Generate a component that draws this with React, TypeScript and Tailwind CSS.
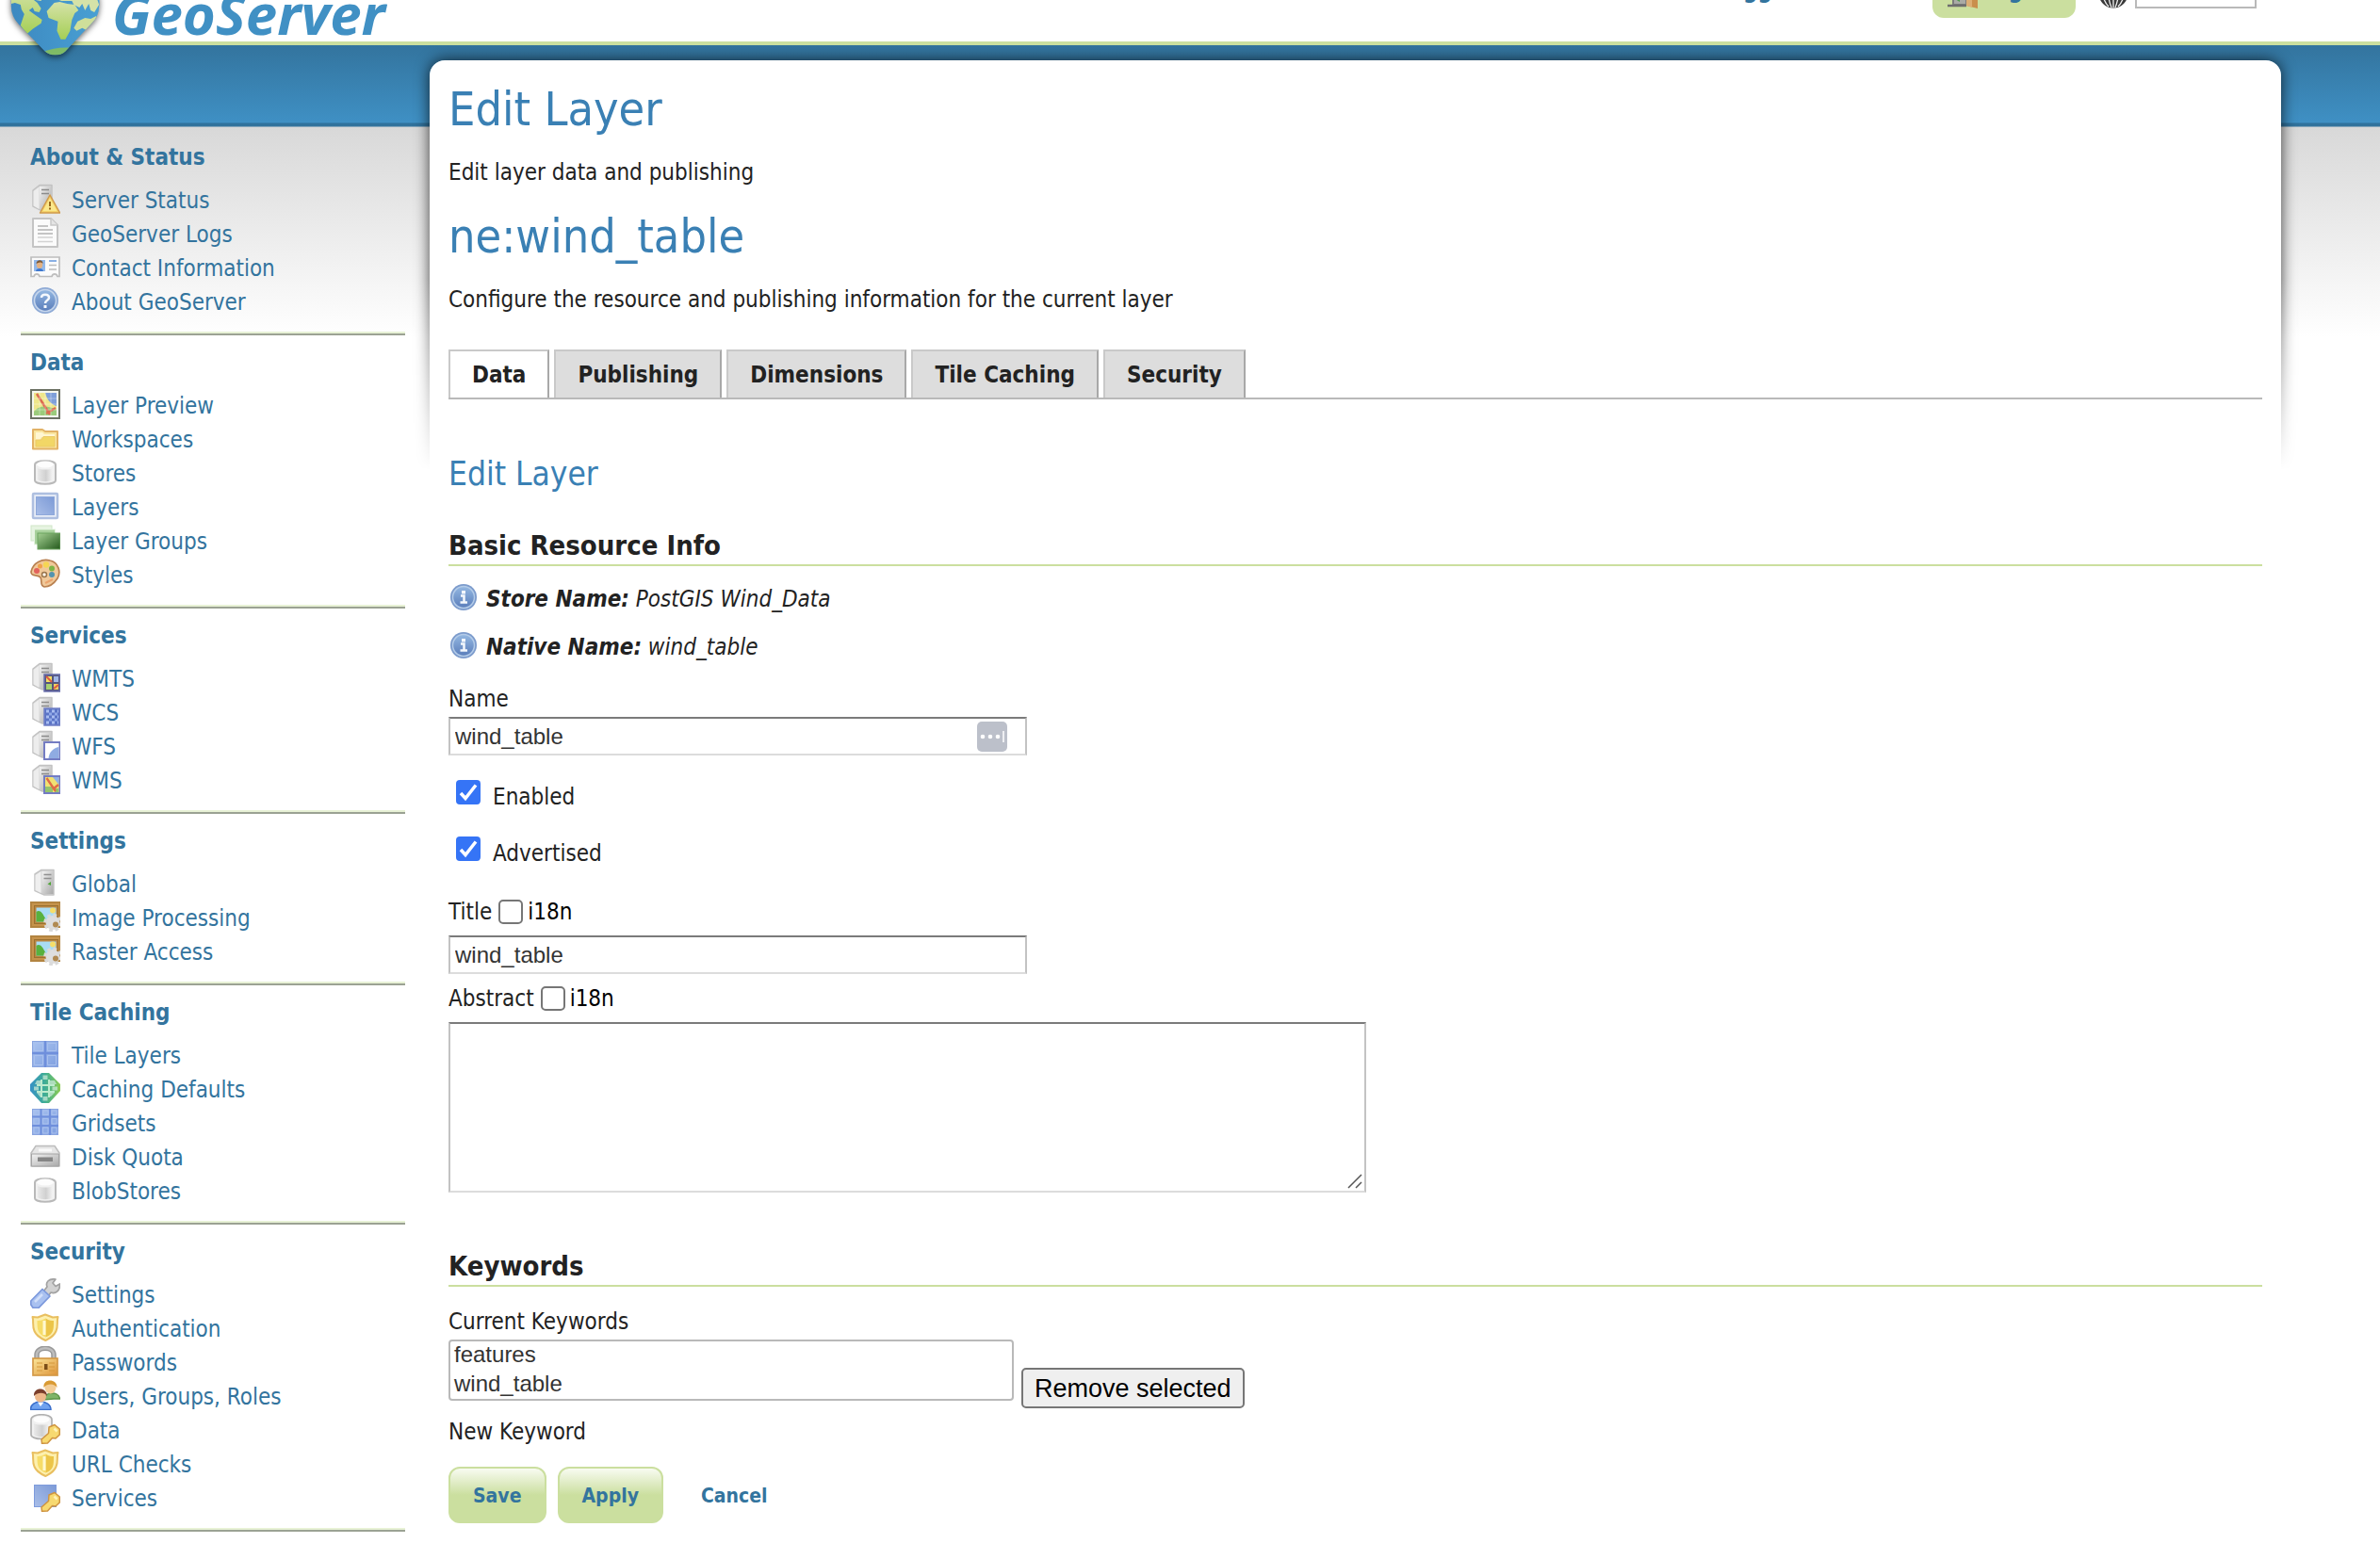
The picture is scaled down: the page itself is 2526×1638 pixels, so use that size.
import React from 'react';

type IconName =
  | 'serverWarn' | 'page' | 'vcard' | 'help' | 'map' | 'folder' | 'db' | 'layer' | 'layers' | 'palette'
  | 'wmts' | 'wcs' | 'wfs' | 'wms' | 'server' | 'picture' | 'grid2' | 'gwc' | 'grid3' | 'disk'
  | 'wrench' | 'shield' | 'lock' | 'users' | 'dbKey' | 'vectorKey' | 'info';

function Defs() {
  return (
    <svg width="0" height="0" className="absolute" aria-hidden="true">
      <defs>
        <linearGradient id="steel" x1="0" y1="0" x2="1" y2="1">
          <stop offset="0" stopColor="#f3f3f3" />
          <stop offset="1" stopColor="#a9a9a9" />
        </linearGradient>
        <linearGradient id="cyl" x1="0" y1="0" x2="1" y2="0">
          <stop offset="0" stopColor="#e9e9e9" />
          <stop offset=".55" stopColor="#d0d0d0" />
          <stop offset="1" stopColor="#f4f4f4" />
        </linearGradient>
        <linearGradient id="blue" x1="1" y1="0" x2="0" y2="1">
          <stop offset="0" stopColor="#7c9ad6" />
          <stop offset="1" stopColor="#a9bee8" />
        </linearGradient>
        <linearGradient id="tile" x1="0" y1="0" x2="1" y2="1">
          <stop offset="0" stopColor="#a9c3ef" />
          <stop offset="1" stopColor="#7f9fe0" />
        </linearGradient>
        <linearGradient id="green" x1="0" y1="0" x2="1" y2="1">
          <stop offset="0" stopColor="#a5d093" />
          <stop offset="1" stopColor="#23591c" />
        </linearGradient>
        <linearGradient id="brass" x1="0" y1="0" x2="1" y2="1">
          <stop offset="0" stopColor="#fbe69a" />
          <stop offset="1" stopColor="#dd9338" />
        </linearGradient>
        <linearGradient id="orb" x1="0" y1="0" x2="0" y2="1">
          <stop offset="0" stopColor="#94b8e2" />
          <stop offset="1" stopColor="#5a7dba" />
        </linearGradient>
        <linearGradient id="teal" x1="0" y1="0" x2="1" y2="0">
          <stop offset="0" stopColor="#3791c6" />
          <stop offset=".5" stopColor="#3fae94" />
          <stop offset="1" stopColor="#8ccb52" />
        </linearGradient>
        <linearGradient id="ocean" x1="0" y1="0" x2="1" y2="0">
          <stop offset="0" stopColor="#3b86be" />
          <stop offset="1" stopColor="#4ba3d6" />
        </linearGradient>
        <linearGradient id="land" x1="0" y1="0" x2="0" y2="1">
          <stop offset="0" stopColor="#d5e2a8" />
          <stop offset="1" stopColor="#a5cf55" />
        </linearGradient>
      </defs>
    </svg>
  );
}

const Tower = () => (
  <g>
    <path d="M3 7 L10 1.5 H23 V29 H13 L3 24 Z" fill="#d4d4d4" stroke="#c2c2c2" strokeWidth="1.5" strokeLinejoin="round" />
    <path d="M3.5 8 L9.500 3.500 V27 L3.500 23.500 Z" fill="#ededed" />
    <path d="M10 3 H22 V28 H12 L10 27 Z" fill="url(#steel)" />
    <path d="M12 6.500 H20 M12 10.500 H20" stroke="#8b8b8b" strokeWidth="1.700" />
  </g>
);

const Key = () => (
  <g stroke="#cf9440" strokeWidth="1.500" strokeLinejoin="round">
    <path d="M20 14 L26 11.500 L31.300 16 L31.300 22 L27 26 L23.500 25.500 L18.500 31 L12.500 31.300 L12 27 L19.500 20.500 Z" fill="#f7d970" />
    <path d="M25.500 15.500 L28.500 18.500" stroke="#fff2b8" strokeWidth="2.500" />
  </g>
);

const Cylinder = () => (
  <g>
    <path d="M5 8 C5 3 27 3 27 8 V25 C27 30 5 30 5 25 Z" fill="#f1f1f1" stroke="#b9b9b9" strokeWidth="2" />
    <path d="M8 12 C11 14 21 14 24 12 V24 C21 27 11 27 8 24 Z" fill="url(#cyl)" />
    <ellipse cx="16" cy="8" rx="9" ry="3.500" fill="#fdfdfd" />
  </g>
);

const Shield = () => (
  <g>
    <path d="M2.500 5 L8 5.500 L16 2.500 L24 5.500 L29.500 5 C28 10 30 15 27.500 20 C25 26 20 28 16.500 30 C12 28 7 26 4.500 20 C2 15 4 10 2.500 5 Z" fill="#fdf0ae" stroke="#e9bf5f" strokeWidth="2" strokeLinejoin="round" />
    <path d="M16.500 6.500 C12 9 9 9 7.500 9 C7.500 19 8 23 16.500 26.500 Z" fill="#f6dc68" />
    <path d="M16.500 6.500 C20 9 23 9 25 9 C25 19 25 23 16.500 26.500 Z" fill="#ecc548" />
    <path d="M15 9 V24" stroke="#fff8d0" strokeWidth="3" />
  </g>
);

const icons: Record<IconName, React.ReactNode> = {
  serverWarn: (
    <g>
      <Tower />
      <path d="M21 12 L31.500 31 H10.500 Z" fill="#f4d269" stroke="#d09a4c" strokeWidth="1.500" strokeLinejoin="round" />
      <path d="M21 15.500 L28.500 29 H13.500 Z" fill="#fbe88c" />
      <path d="M21 19 V24 M21 25.500 V27.500" stroke="#9a6a1c" strokeWidth="2" />
    </g>
  ),
  page: (
    <g>
      <path d="M3 1 H22 L29 8 V31 H3 Z" fill="#fbfbfb" stroke="#c4c4c4" strokeWidth="2" strokeLinejoin="round" />
      <path d="M22 1 V8 H29" fill="#e4e4e4" stroke="#c8c8c8" strokeWidth="1.500" />
      <path d="M8 9 H19 M8 13 H24 M8 17 H24" stroke="#b4b4b4" strokeWidth="1.500" />
      <path d="M8 21 H24 M8 25.500 H24" stroke="#d2d2d2" strokeWidth="1.500" />
    </g>
  ),
  vcard: (
    <g>
      <path d="M1 6 H31 V26.500 H29 C28 23 24 23 23 26.500 H10 C9 23 5 23 4 26.500 H1 Z" fill="#fbfbfb" stroke="#bdbdbd" strokeWidth="1.700" />
      <rect x="4" y="9" width="12" height="12" fill="#92b8ea" />
      <path d="M6 21 C6 17 14 17 14 21 Z" fill="#3f78cf" />
      <ellipse cx="10" cy="14" rx="3.200" ry="4" fill="#e2b183" />
      <path d="M6.500 13 C6.500 8 14 8 13.500 13 C12 11 9 11 6.500 13 Z" fill="#7c5a38" />
      <path d="M20 10 H28" stroke="#8ab0e4" strokeWidth="2" />
      <path d="M20 14.500 H28 M20 19 H28" stroke="#bcbcbc" strokeWidth="1.500" />
    </g>
  ),
  help: (
    <g>
      <circle cx="16" cy="16" r="14" fill="#8fabd6" />
      <circle cx="16" cy="16" r="11.500" fill="url(#orb)" stroke="#c6d6ec" strokeWidth="1.500" />
      <path d="M12 13 C12 8.500 20 8.500 20 13 C20 16 16 15.500 16 19" fill="none" stroke="#f4f8fd" strokeWidth="2.500" />
      <rect x="14.500" y="21" width="3" height="3" fill="#f4f8fd" />
    </g>
  ),
  map: (
    <g>
      <rect x="1" y="1" width="30" height="30" fill="#f6f7ee" stroke="#6d7265" strokeWidth="2" />
      <rect x="4" y="4" width="24" height="24" fill="#efe68a" />
      <path d="M16 4 H28 V18 C22 16 18 12 16 4 Z" fill="#7f9fd9" />
      <path d="M4 24 C10 16 20 18 28 22 V28 H4 Z" fill="#9bcb7b" />
      <path d="M7 5 L21 27 M17 26 L27 20" stroke="#dc6a50" strokeWidth="2.500" />
      <path d="M10 4 V28 M16 4 V28 M22 4 V28 M4 10 H28 M4 16 H28 M4 22 H28" stroke="#ffffff" strokeOpacity=".35" />
    </g>
  ),
  folder: (
    <g>
      <path d="M3 7 H13 L16 9 H29 V27.500 H3 Z" fill="#fae6a0" stroke="#e2b266" strokeWidth="2" strokeLinejoin="round" />
      <path d="M6 10 H13 L15 12 H26 V15 H12 L10 18 H6 Z" fill="#fff6d2" />
      <path d="M6 25 L6 18 H12 L14 14.500 H26 V25 Z" fill="#f2d766" stroke="#ecc966" />
    </g>
  ),
  db: <Cylinder />,
  layer: (
    <g>
      <rect x="3" y="3" width="26" height="26" rx="1" fill="#e9eef8" stroke="#aebfe0" strokeWidth="2.500" />
      <rect x="6.500" y="6.500" width="19" height="19" fill="url(#blue)" stroke="#8ea8da" />
    </g>
  ),
  layers: (
    <g>
      <rect x="1" y="1" width="22" height="16" fill="#e6f4e1" stroke="#cfe6c8" />
      <rect x="4.500" y="5" width="22" height="16" fill="#a8d19c" stroke="#e4f3df" />
      <rect x="8" y="9" width="24" height="17" fill="url(#green)" stroke="#6ba45e" />
    </g>
  ),
  palette: (
    <g>
      <path d="M1 14 C3 4 13 0 21 2 C30 4 33 14 29 21 C25 27 20 30 15 30 C10 29 13 23 11 20 C8 16 1 20 1 14 Z" fill="#f0c99a" stroke="#b98050" strokeWidth="1.700" />
      <circle cx="7" cy="13" r="3" fill="#e2625c" />
      <circle cx="10.500" cy="8" r="2.500" fill="#f0a04a" />
      <circle cx="17" cy="6.500" r="3.200" fill="#f5d654" />
      <circle cx="23" cy="10.500" r="3" fill="#7cb547" />
      <circle cx="23" cy="17" r="3" fill="#5393b0" />
      <circle cx="15" cy="17" r="2.500" fill="#fff8ec" stroke="#99754c" strokeWidth="1.500" />
      <path d="M16 26 L24 22" stroke="#eba36d" strokeWidth="2" />
    </g>
  ),
  wmts: (
    <g>
      <Tower />
      <rect x="15" y="13" width="16.500" height="18" fill="#55557c" stroke="#6a70ad" strokeWidth="1.500" />
      <rect x="17" y="15" width="6" height="6" fill="#f4df62" />
      <path d="M17 15 L23 21" stroke="#dd5a46" strokeWidth="2" />
      <rect x="25" y="15" width="5" height="6" fill="#9fb6e6" />
      <rect x="17" y="23" width="6" height="6" fill="#a6d071" />
      <rect x="25" y="23" width="5" height="6" fill="#f0cf5d" />
      <path d="M25 28 L30 24" stroke="#dd5a46" strokeWidth="2" />
    </g>
  ),
  wcs: (
    <g>
      <Tower />
      <rect x="15" y="13" width="16.500" height="18" fill="#5b74c6" stroke="#7280c6" strokeWidth="1.500" />
      <path d="M17 16 H30 M17 22 H30 M17 28 H30" stroke="#a9bdf0" strokeWidth="3" strokeDasharray="3 3" />
      <path d="M20 19 H30 M20 25 H30" stroke="#90a8e8" strokeWidth="3" strokeDasharray="3 3" />
    </g>
  ),
  wfs: (
    <g>
      <Tower />
      <rect x="15" y="13" width="16.500" height="18" fill="#ffffff" stroke="#747cc2" strokeWidth="2" />
      <path d="M30.500 18 C24 19 20 24 19.500 30 H30.500 Z" fill="#8fabe2" />
    </g>
  ),
  wms: (
    <g>
      <Tower />
      <rect x="15" y="13" width="16.500" height="18" fill="#f1e172" stroke="#747cc2" strokeWidth="2" />
      <path d="M24 14 H30.500 V22 Z" fill="#90b0e6" />
      <path d="M16 24 H24 V30 H16 Z M26 26 H30 V30 H26 Z" fill="#94c46c" />
      <path d="M17.500 15 L27 29 M24 27 L30 22" stroke="#e06a46" strokeWidth="2.300" />
    </g>
  ),
  server: (
    <g>
      <path d="M5 7 L12 2.500 H25 V29 H15 L5 24.500 Z" fill="#d4d4d4" stroke="#c4c4c4" strokeWidth="1.500" strokeLinejoin="round" />
      <path d="M5.500 8 L11.500 4 V27 L5.500 24 Z" fill="#efefef" />
      <path d="M12.500 4 H24.500 V28 H14.500 L12.500 27 Z" fill="url(#steel)" />
      <path d="M14.500 7.500 H22.500 M14.500 11.500 H22.500" stroke="#909090" strokeWidth="1.700" />
      <path d="M18.500 17.500 L22 15 V19 Z" fill="#4ea436" />
    </g>
  ),
  picture: (
    <g>
      <rect x="1" y="1" width="31" height="26" fill="#c6934c" stroke="#b28440" strokeWidth="2" />
      <rect x="4.500" y="4.500" width="25" height="19" fill="#b98540" stroke="#9a7030" />
      <rect x="6.500" y="6.500" width="21" height="15" fill="#a9dcf5" />
      <path d="M6.500 11 C10 8 13 12 15 16 L18 21.500 H6.500 Z" fill="#58b13e" />
      <circle cx="24" cy="9.500" r="3" fill="#f6de6a" />
      <circle cx="24" cy="22.500" r="7.500" fill="#dedede" />
      <circle cx="24" cy="22.500" r="8" fill="none" stroke="#dadada" strokeWidth="3.500" strokeDasharray="3.600 2.700" />
      <circle cx="27" cy="24.500" r="3" fill="#b08a52" />
    </g>
  ),
  grid2: (
    <g>
      <rect x="2.500" y="2.500" width="27" height="27" fill="url(#tile)" stroke="#8aa5e0" />
      <path d="M16 2 V30 M2 15 H30" stroke="#6f8fdc" strokeWidth="2.500" />
      <path d="M4.500 4.500 H13.500 V12.500 H4.500 Z M18.500 4.500 H27.500 V12.500 H18.500 Z M4.500 17.500 H13.500 V27.500 H4.500 Z M18.500 17.500 H27.500 V27.500 H18.500 Z" fill="none" stroke="#a9c0ee" />
    </g>
  ),
  gwc: (
    <g>
      <path d="M12 0 H20 L32 12 V19 L20 32 H12 L0 19 V12 Z" fill="url(#teal)" />
      <path d="M7 8 H11 V12 H5 Z M13.500 2.500 H18.500 V7 H13.500 Z M21 8 H26 L28 12 H21 Z M4 14.500 H9 V18.500 H4 Z M23.500 14.500 H29 V18.500 H23.500 Z M7 21 H11 V26 Z M21 21 H26 L22 25 H21 Z M13.500 25 H18.500 V29.500 H13.500 Z" fill="#c7e8d6" fillOpacity=".75" />
      <path d="M12 7 V26 M20 7 V26 M7 13 H26 M7 20 H26" stroke="#bcebcd" strokeWidth="2" />
    </g>
  ),
  grid3: (
    <g>
      <rect x="2.500" y="2.500" width="27" height="27" fill="url(#tile)" stroke="#8aa5e0" />
      <path d="M11.500 2 V30 M21 2 V30 M2 10.500 H30 M2 20 H30" stroke="#6f8fdc" strokeWidth="2" />
      <path d="M4 4 H9.500 V8.500 H4 Z M13.500 4 H19 V8.500 H13.500 Z M23 4 H28 V8.500 H23 Z M4 12.500 H9.500 V18 H4 Z M13.500 12.500 H19 V18 H13.500 Z M23 12.500 H28 V18 H23 Z M4 22 H9.500 V28 H4 Z M13.500 22 H19 V28 H13.500 Z M23 22 H28 V28 H23 Z" fill="none" stroke="#a9c0ee" />
    </g>
  ),
  disk: (
    <g>
      <path d="M6 5.500 H26 L31 13 V27 H1 V13 Z" fill="#e6e6e6" stroke="#bdbdbd" strokeWidth="1.500" strokeLinejoin="round" />
      <path d="M1.500 14 H30.500 V27 H1.500 Z" fill="url(#steel)" stroke="#a4a4a4" />
      <rect x="8" y="17.500" width="16" height="4.500" fill="#858585" />
      <path d="M9 10 H23" stroke="#fafafa" strokeWidth="3" />
    </g>
  ),
  wrench: (
    <g strokeLinejoin="round">
      <path d="M14 14 L18 9 C16 4 20 0 27 1 L24 5 L27 8.500 L31.500 6 C32 13 27 17 22 15 L19 19 Z" fill="#d2d2d2" stroke="#a2a2a2" strokeWidth="1.700" />
      <path d="M13 11.500 L21 19 L9 31.300 H3 L.800 28 V24 Z" fill="#a9c1f0" stroke="#7b98dc" strokeWidth="1.700" />
      <path d="M5 25 L13 17" stroke="#d2dff9" strokeWidth="2.500" />
    </g>
  ),
  shield: <Shield />,
  lock: (
    <g>
      <path d="M7 14 V9 C7 0 25 0 25 9 V14" fill="none" stroke="#999999" strokeWidth="5.500" />
      <path d="M7 14 V9 C7 0 25 0 25 9 V14" fill="none" stroke="#bdbdbd" strokeWidth="2.500" />
      <rect x="3" y="13" width="26" height="18" fill="url(#brass)" stroke="#d49a48" strokeWidth="1.700" />
      <path d="M7 18 H13 M7 22 H13 M7 26 H13 M20 18 H26 M20 22 H26 M20 26 H26" stroke="#d5973a" strokeWidth="1.200" />
      <rect x="15" y="19" width="3.500" height="6" fill="#7b4e18" />
    </g>
  ),
  users: (
    <g>
      <path d="M14 21 C14 13 30 11 31.500 20 H25 Z" fill="#7fb568" stroke="#5d9447" strokeWidth="1.500" />
      <ellipse cx="21.500" cy="8" rx="6" ry="6.500" fill="#f3cd97" />
      <path d="M14.500 8 C13 -2 29 -2 28.500 8 C26 4 19 3 14.500 8 Z" fill="#d99a33" />
      <path d="M.5 31.500 C0 20 22 20 22 31.500 Z" fill="#6fa2ef" stroke="#3a6fcc" strokeWidth="1.500" />
      <path d="M8 23.500 L11 28 L14.500 23.500 Z" fill="#ffffff" />
      <ellipse cx="11" cy="17.500" rx="6" ry="6" fill="#eeb88a" />
      <path d="M4 17 C3 7 18 7 18 17 C15 12.500 8 13 4 17 Z" fill="#7b3f2c" />
    </g>
  ),
  dbKey: (
    <g>
      <path d="M1 6 C1 -1 23 -1 23 6 V22 C23 28 1 28 1 22 Z" fill="#f1f1f1" stroke="#b0b0b0" strokeWidth="1.700" />
      <path d="M4 10 C7 12 17 12 20 10 V22 C17 25 7 25 4 22 Z" fill="url(#cyl)" />
      <ellipse cx="12" cy="6" rx="8.500" ry="3.500" fill="#fdfdfd" />
      <Key />
    </g>
  ),
  vectorKey: (
    <g>
      <rect x="4.500" y="3.500" width="23" height="23" fill="url(#blue)" stroke="#7e9bdc" />
      <Key />
    </g>
  ),
  info: (
    <g>
      <circle cx="16" cy="16" r="14" fill="#7c9bcc" />
      <circle cx="16" cy="16" r="11.500" fill="url(#orb)" stroke="#b3cbe8" strokeWidth="1.500" />
      <rect x="14" y="9" width="4" height="3.500" fill="#f4f8fd" />
      <path d="M13 14.500 H16.500 V21 M12.500 21.500 H20" fill="none" stroke="#f4f8fd" strokeWidth="2.500" />
    </g>
  ),
};

function Icon({ name }: { name: IconName }) {
  return (
    <svg viewBox="0 0 32 32" className="h-8 w-8 shrink-0" aria-hidden="true">
      {icons[name]}
    </svg>
  );
}

const menu: { title: string; items: [IconName, string][] }[] = [
  { title: 'About & Status', items: [['serverWarn', 'Server Status'], ['page', 'GeoServer Logs'], ['vcard', 'Contact Information'], ['help', 'About GeoServer']] },
  { title: 'Data', items: [['map', 'Layer Preview'], ['folder', 'Workspaces'], ['db', 'Stores'], ['layer', 'Layers'], ['layers', 'Layer Groups'], ['palette', 'Styles']] },
  { title: 'Services', items: [['wmts', 'WMTS'], ['wcs', 'WCS'], ['wfs', 'WFS'], ['wms', 'WMS']] },
  { title: 'Settings', items: [['server', 'Global'], ['picture', 'Image Processing'], ['picture', 'Raster Access']] },
  { title: 'Tile Caching', items: [['grid2', 'Tile Layers'], ['gwc', 'Caching Defaults'], ['grid3', 'Gridsets'], ['disk', 'Disk Quota'], ['db', 'BlobStores']] },
  { title: 'Security', items: [['wrench', 'Settings'], ['shield', 'Authentication'], ['lock', 'Passwords'], ['users', 'Users, Groups, Roles'], ['dbKey', 'Data'], ['shield', 'URL Checks'], ['vectorKey', 'Services']] },
];

function Sidebar() {
  return (
    <nav className="w-[456px] shrink-0 pt-[74px] pr-[26px] pl-[22px] text-[#33749e]">
      {menu.map((section) => (
        <section key={section.title} className="border-b-2 border-[#9ba293] pt-[11px]">
          <h2 className="mb-[10px] pl-[10px] font-bold">{section.title}</h2>
          <ul className="border-b-2 border-[#e8f2d6] pb-[13px] pl-[10px]">
            {section.items.map(([icon, label]) => (
              <li key={label}>
                <a href="#" className="flex h-9 items-start gap-3">
                  <Icon name={icon} />
                  {label}
                </a>
              </li>
            ))}
          </ul>
        </section>
      ))}
    </nav>
  );
}

function Globe() {
  return (
    <svg viewBox="0 -50 120 115" className="h-[115px] w-[120px] drop-shadow-[0_2px_3px_rgba(0,0,0,0.6)]" aria-hidden="true">
      <defs>
        <clipPath id="drop">
          <path d="M18 -20 L45 -46 Q59 -54 73 -46 L100 -20 Q108 -2 106 8 Q106 18 98 26 L70 56 Q66 60 59 60 Q53 60 48 56 L20 27 Q11 17 12 5 Q11 -6 18 -20 Z" />
        </clipPath>
      </defs>
      <g clipPath="url(#drop)">
        <rect x="0" y="-60" width="120" height="130" fill="url(#ocean)" />
        <path d="M12 -12 L36 -8 L35 0 L40 4 L44 10 L42 14 L37 13 L35 9 L31 12 L35 15 L45 22 L44 26 L35 32 L28 38 L22 28 L26 16 L23 11 L22 6 L16 4 L12 5 Z" fill="url(#land)" />
        <path d="M38 -6 H46 L44 2 L38 1 Z" fill="#d5e2a8" />
        <path d="M58 4 L64 3 L72 5 L80 6 L84 12 L80 15 L77 22 L75 34 L70 43 L65 43 L61 34 L62 24 L52 20 L50 13 Z" fill="url(#land)" />
        <path d="M60 -10 L100 -12 L106 6 L101 14 L97 12 L95 5 L91 12 L88 5 L85 9 L79 6 L77 2 L66 2 L60 0 Z" fill="#d5e2a8" />
        <path d="M79 31 L83 24 L91 20 L97 21 L103 18 L104 24 L94 34 L88 31 L82 34 Z" fill="#cfdf9a" />
        <path d="M46 57 Q58 51 76 52 L70 62 H50 Z" fill="#7fbb66" />
      </g>
    </svg>
  );
}

function Header() {
  return (
    <header className="relative z-10 flex h-12 items-end border-b-4 border-[#cbdf9f] bg-white text-[#33749e]">
      <a href="#" className="flex h-0 flex-1 items-end" aria-label="GeoServer">
        <span className="-mb-5 flex w-[119px] shrink-0">
          <Globe />
        </span>
        <span className="-mb-3 font-['Noto_Sans',sans-serif] text-[60px] leading-[84px] font-bold text-[#4090c4] italic">GeoServer</span>
      </a>
      <div className="mr-[131px] mb-[25px] flex items-end font-bold">
        <span className="mr-[-8px] mb-[11px]">Logged in as admin</span>
        <button type="button" className="relative flex h-[60px] w-[152px] items-end gap-1 rounded-xl bg-[#cbdf9f] pb-[10px] pl-4">
          <svg viewBox="0 0 32 32" className="h-8 w-8" aria-hidden="true">
            <path d="M6 28 V8 H20 V28 Z" fill="#a9aaa5" stroke="#7c7c7c" strokeWidth="2" />
            <path d="M0 29 H20" stroke="#6e6e6e" strokeWidth="2.500" />
            <path d="M8 22 L13 25 V14 Z" fill="#4f9a4a" />
            <path d="M20 6 L32 3 V32 L20 29 Z" fill="#c98f4c" />
            <path d="M20 6 L26 5 V31 L20 29 Z" fill="#dcae74" />
          </svg>
          <span className="mb-[7px] leading-6">Logout</span>
        </button>
        <svg viewBox="0 0 32 32" className="mr-[7px] mb-[10px] ml-6 h-8 w-8" aria-hidden="true">
          <circle cx="16" cy="16" r="15.500" fill="#3a3a3a" />
          <path d="M16 1 V31 M6 5 C3 14 5 24 11 30 M26 5 C29 14 27 24 21 30 M11 2 C9 12 11 24 14 31 M21 2 C23 12 21 24 18 31 M2 11 H30 M1 19 H31" fill="none" stroke="#f0f0f0" strokeWidth="1.300" />
        </svg>
        <select aria-label="Language" className="mb-[10px] h-10 w-[129px] appearance-none border-2 border-[#b9b9b9] bg-white">
          <option></option>
        </select>
      </div>
    </header>
  );
}

const fieldBorder = 'border-2 border-x-[#c3c3c3] border-t-[#7b7b7b] border-b-[#dcdcdc] bg-white';

function TextField({ id, children }: { id: string; children?: React.ReactNode }) {
  return (
    <div className={`flex h-[41px] w-[614px] items-center pr-[19px] ${fieldBorder}`}>
      <input id={id} type="text" defaultValue="wind_table" className="min-w-0 flex-1 pl-[5px] font-['Liberation_Sans',sans-serif] leading-7 text-[#333333] outline-none" />
      {children}
    </div>
  );
}

function Tick({ id, label, className }: { id: string; label: string; className: string }) {
  return (
    <div className={`flex h-9 pl-2 ${className}`}>
      <span className="relative mt-px flex h-[26px]">
        <input id={id} type="checkbox" defaultChecked className="h-[26px] w-[26px] appearance-none rounded-[4px] bg-[#3574f6]" />
        <svg viewBox="0 0 26 26" className="pointer-events-none absolute inset-0 h-[26px] w-[26px]" aria-hidden="true">
          <path d="M5 14 L10 19.500 L21 5.500" fill="none" stroke="#ffffff" strokeWidth="3.500" />
        </svg>
      </span>
      <label htmlFor={id} className="pt-px pl-[13px]">{label}</label>
    </div>
  );
}

function I18nLabel({ field, label, className }: { field: string; label: string; className: string }) {
  return (
    <div className={`flex items-center ${className}`}>
      <label htmlFor={field}>{label}</label>
      <input id={`${field}-i18n`} type="checkbox" className="mr-[5px] ml-[7px] h-[26px] w-[26px] appearance-none rounded-[5px] border-2 border-[#767676] bg-white" />
      <label htmlFor={`${field}-i18n`} className="text-black">i18n</label>
    </div>
  );
}

const h1Class = 'mb-[19px] text-[50px] leading-[60px] text-[#3a80b4]';
const h3Class = 'border-b-2 border-[#cbdf9f] pb-[2px] text-[29px] leading-9 font-bold';
const greenButton = 'h-[60px] rounded-xl border-2 border-[#cbdf9f] bg-[linear-gradient(to_bottom,#f8fbf1_0%,#cbdf9f_50%)] px-6 pt-[2px] text-[21px] font-bold text-[#33749e]';

export default function App() {
  return (
    <div className="flex min-h-screen flex-col bg-white font-['DejaVu_Sans_Condensed','DejaVu_Sans',sans-serif] text-[24px] leading-9 text-[#222222]">
      <Defs />
      <Header />
      <div className="flex flex-1 bg-[linear-gradient(to_bottom,#33749e_0px,#3f90c4_82px,#2f709b_83px,#33749e_86px,#d8d8d8_87px,#dcdcdc_108px,#ffffff_310px)] pt-4">
        <Sidebar />
        <main className="relative mr-[105px] min-w-0 flex-1">
          <div className="pointer-events-none absolute -inset-x-5 -top-5 h-[460px] overflow-hidden p-5 [mask-image:linear-gradient(to_bottom,black_55%,transparent_99%)]">
            <div className="h-[600px] rounded-t-[16px] shadow-[0_0_16px_rgba(0,0,0,0.75)]" />
          </div>
          <div className="relative h-full rounded-t-[16px] bg-white px-5 pt-[22px]">
            <h1 className={h1Class}>Edit Layer</h1>
            <p className="mb-5">Edit layer data and publishing</p>
            <h1 className={h1Class}>ne:wind_table</h1>
            <p>Configure the resource and publishing information for the current layer</p>

            <div role="tablist" className="mt-[35px] flex h-[53px] gap-[5px] border-b-2 border-[#b9b9b9]">
              {['Data', 'Publishing', 'Dimensions', 'Tile Caching', 'Security'].map((tab, i) => (
                <button
                  key={tab}
                  type="button"
                  role="tab"
                  aria-selected={i === 0}
                  className={`border-x-2 border-t-2 border-t-[#c9c9c9] border-r-[#a8a8a8] border-l-[#c9c9c9] px-[23px] font-bold ${i === 0 ? 'bg-white' : 'bg-[#dddddd]'}`}
                >
                  {tab}
                </button>
              ))}
            </div>

            <h2 className="mt-[57px] text-[35px] leading-[44px] text-[#3a80b4]">Edit Layer</h2>
            <h3 className={`mt-9 ${h3Class}`}>Basic Resource Info</h3>
            <p className="mt-[17px] flex gap-2 italic">
              <Icon name="info" />
              <span><strong>Store Name:</strong> PostGIS Wind_Data</span>
            </p>
            <p className="mt-[15px] flex gap-2 italic">
              <Icon name="info" />
              <span><strong>Native Name:</strong> wind_table</span>
            </p>

            <label htmlFor="name" className="mt-[19px] mb-px block">Name</label>
            <TextField id="name">
              <svg viewBox="0 0 32 32" className="h-8 w-8" aria-hidden="true">
                <rect width="32" height="32" rx="5" fill="#bcc0ca" />
                <circle cx="6" cy="16" r="2.300" fill="#fff" />
                <circle cx="14" cy="16" r="2.300" fill="#fff" />
                <circle cx="22" cy="16" r="2.300" fill="#fff" />
                <path d="M28 10 V22" stroke="#fff" strokeWidth="1.500" />
              </svg>
            </TextField>
            <Tick id="enabled" label="Enabled" className="mt-[25px]" />
            <Tick id="advertised" label="Advertised" className="mt-6" />

            <I18nLabel field="title" label="Title" className="mt-[27px] mb-[7px]" />
            <TextField id="title" />
            <I18nLabel field="abstract" label="Abstract" className="mt-2 mb-[7px]" />
            <div className="relative w-[974px]">
              <textarea id="abstract" className={`block h-[181px] w-full resize-none ${fieldBorder}`} />
              <svg viewBox="0 0 16 16" className="pointer-events-none absolute right-1 bottom-1 h-4 w-4" aria-hidden="true">
                <path d="M1 15 L15 1 M9 15 L15 9" stroke="#555555" strokeWidth="1.500" />
              </svg>
            </div>

            <h3 className={`mt-[60px] ${h3Class}`}>Keywords</h3>
            <label htmlFor="keywords" className="mt-[19px] mb-px block">Current Keywords</label>
            <div className="flex items-end gap-2 font-['Liberation_Sans',sans-serif]">
              <select id="keywords" multiple size={2} className="mb-2 h-[65px] w-[600px] overflow-hidden rounded-[4px] border-2 border-[#b9b9b9] bg-white pl-1 text-[#333333]">
                <option className="h-[31px] p-0 leading-[30px]">features</option>
                <option className="h-[31px] p-0 leading-[30px]">wind_table</option>
              </select>
              <button type="button" className="h-[43px] rounded-[5px] border-2 border-[#767676] bg-[#efefef] px-3 text-[27px] leading-8 text-black">Remove selected</button>
            </div>
            <p className="mt-[7px]">New Keyword</p>
            <div className="mt-[19px] flex items-center gap-3">
              <button type="button" className={greenButton}>Save</button>
              <button type="button" className={greenButton}>Apply</button>
              <a href="#" className="ml-7 pt-[2px] text-[21px] font-bold text-[#33749e]">Cancel</a>
            </div>
          </div>
        </main>
      </div>
    </div>
  );
}
